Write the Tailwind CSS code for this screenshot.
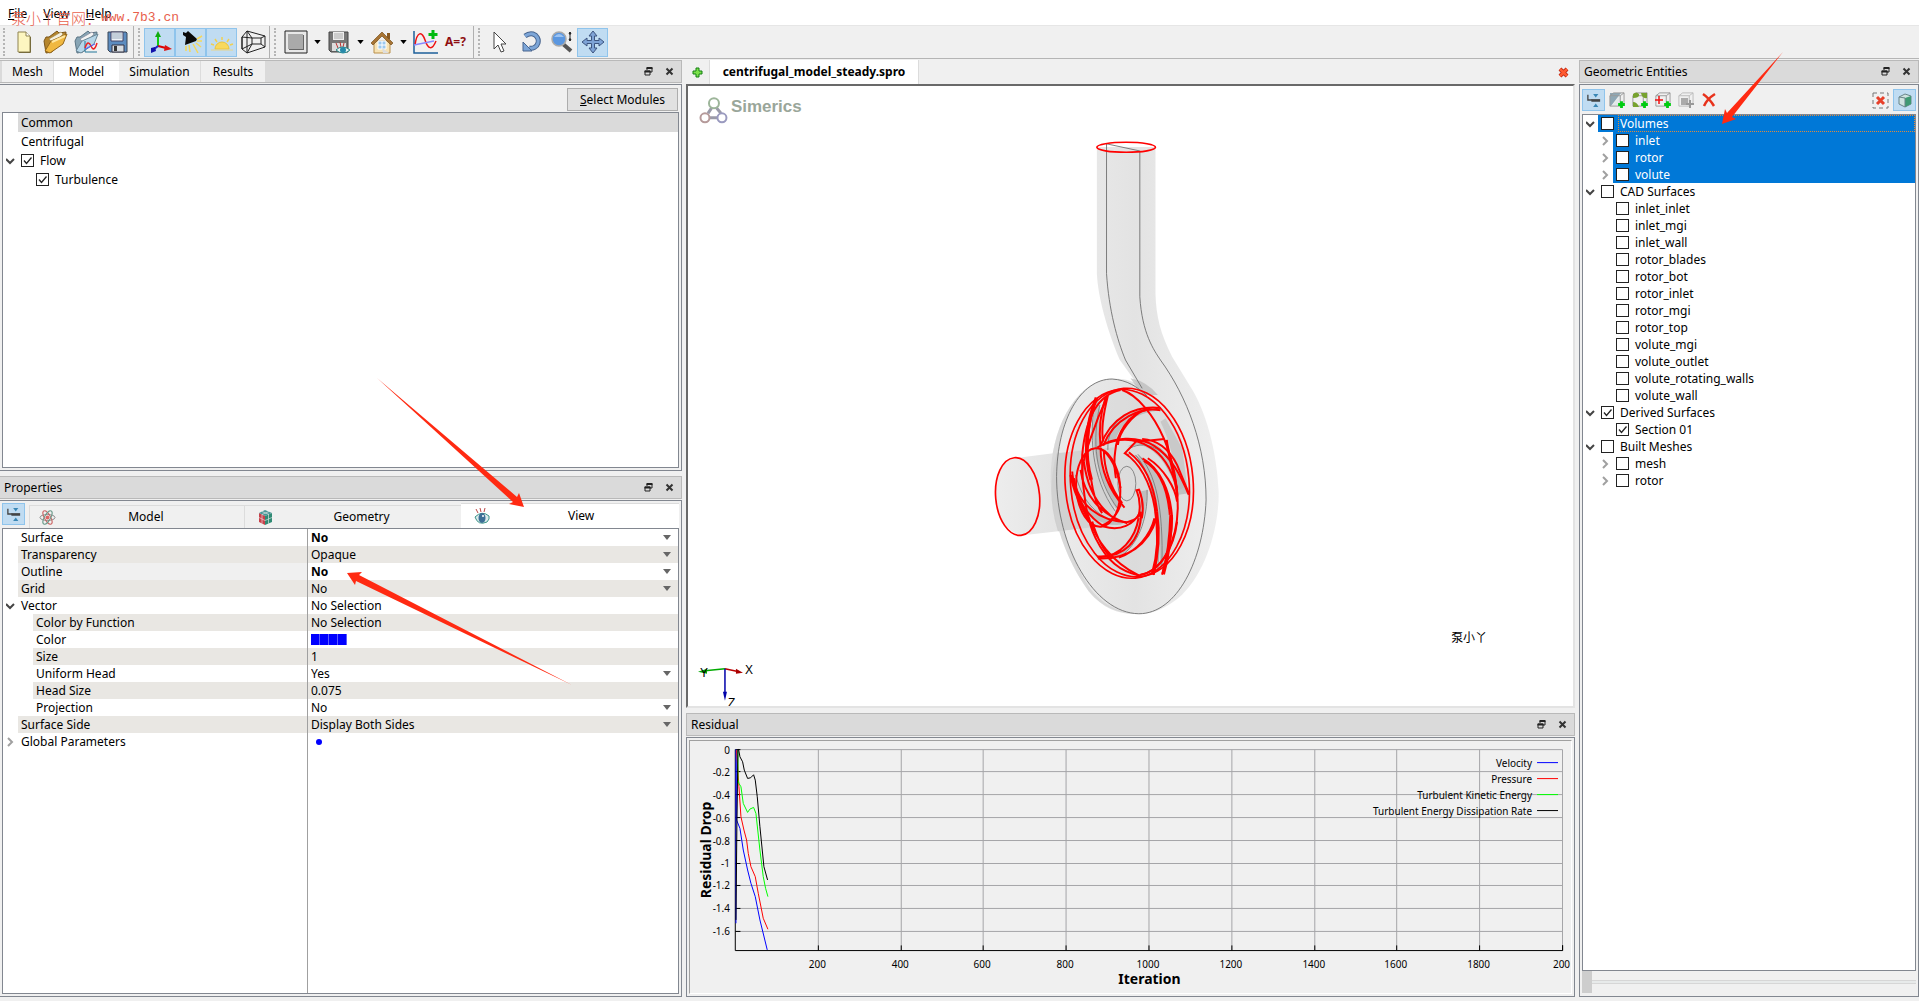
<!DOCTYPE html>
<html lang="en">
<head>
    <meta charset="UTF-8">
    <meta name="viewport" content="width=device-width, initial-scale=1.0">
    <title>Simerics - centrifugal_model_steady.spro</title>
    <script src="https://cdn.jsdelivr.net/npm/@tailwindcss/browser@4"></script>
    <style>
        body {
            font-family: 'Noto Sans', 'Noto Sans CJK SC', sans-serif;
        }
    </style>
</head>
<body class="relative flex h-screen flex-col overflow-hidden bg-[#f0f0f0] text-xs text-black">
    <!-- shared icons -->
    <svg class="hidden">
        <symbol id="restore" viewBox="0 0 9 9">
            <path d="M3 3V1h5v4H6" fill="none" stroke="#222"/><path d="M2.500 1h6" stroke="#222" stroke-width="2"/>
            <path d="M1 4h5v4H1z" fill="none" stroke="#222"/><path d="M.5 4.500h6" stroke="#222" stroke-width="2"/>
        </symbol>
        <symbol id="close" viewBox="0 0 9 9"><path d="M1.500 1.500l6 6M7.500 1.500l-6 6" stroke="#333" stroke-width="2"/></symbol>
        <symbol id="caret" viewBox="0 0 8 5"><path d="M0 0h8L4 5z" fill="currentColor"/></symbol>
        <symbol id="down" viewBox="0 0 10 8"><path d="M0 2l4 4 4-4" fill="none" stroke="#444" stroke-width="2"/></symbol>
        <symbol id="right" viewBox="0 0 10 10"><path d="M2 1l4 4-4 4" fill="none" stroke="#a0a0a0" stroke-width="2"/></symbol>
        <symbol id="tick" viewBox="0 0 13 13"><path d="M3 6.500l2.500 3L10.500 3.500" fill="none" stroke="#222" stroke-width="1.300"/></symbol>
        <symbol id="collapse" viewBox="0 0 18 16">
            <path d="M2 2v6h5" fill="none" stroke="#444" stroke-width="1.500"/>
            <path d="M6 7h10v3H6z" fill="#444"/><path d="M8 1h6l-3 4zM8 16h6l-3-4z" fill="#3a87b5"/>
        </symbol>
        <symbol id="cube" viewBox="0 0 18 18"><path d="M2 5l4-3h11v10l-4 4H2zM2 5h11v11M13 5l4-3" fill="none" stroke="#999"/></symbol>
        <symbol id="plus" viewBox="0 0 8 8"><path d="M4 1v6M1 4h6" stroke="#0c1" stroke-width="2.500"/></symbol>
    </svg>

    <nav class="flex h-[25px] shrink-0 gap-4 bg-white pl-2 leading-[28px]">
        <button><u>F</u>ile</button>
        <button><u>V</u>iew</button>
        <button><u>H</u>elp</button>
    </nav>
    <p class="pointer-events-none absolute left-[11px] top-1 flex items-center text-[#e8604c]">
        <span class="text-[15px] leading-7 font-light">泵小丫官网：</span>
        <span class="font-['Liberation_Mono'] text-[13px]">www.7b3.cn</span>
    </p>

    <!-- toolbar -->
    <div class="flex h-[34px] shrink-0 items-center border-b border-[#b5b5b5] border-t border-t-[#e6e6e6]">
        <div class="flex h-full items-center border-r border-[#b0b0b0] pl-[3px]">
            <div class="mr-[3px] h-7 border-l-2 border-dotted border-[#b5b5b5]"></div>
            <button class="flex h-[29px] w-[31px] items-center justify-center" aria-label="New">
                <svg width="18" height="24" viewBox="0 0 18 24"><path d="M3 2h8l4 4v16H3z" fill="#fdf6c0" stroke="#8f8350"/><path d="M11 2v4h4" fill="#fff" stroke="#8f8350"/><path d="M15.500 7v15.500H4" fill="none" stroke="#766b3c"/></svg>
            </button>
            <button class="flex h-[29px] w-[31px] items-center justify-center" aria-label="Open">
                <svg width="26" height="26" viewBox="0 0 26 26"><path d="M2 12l2-4h3l8-6 2 2 7-1-1 6-13 14-6 1z" fill="#b5852c" stroke="#7a561b"/><path d="M7 10l12-7 2 2-9 10z" fill="#f4f0e0" stroke="#a08a50" stroke-width=".7"/><path d="M3 22l6-10 16-7-4 10-13 9z" fill="#f0b840" stroke="#94671c"/><path d="M10 13l13-6" stroke="#ffe7a0" stroke-width="2"/></svg>
            </button>
            <button class="flex h-[29px] w-[31px] items-center justify-center" aria-label="Open results">
                <svg width="26" height="26" viewBox="0 0 26 26"><path d="M2 12l2-4h3l8-6 2 2 7-1-1 6-13 14-6 1z" fill="#88a5b5" stroke="#5b7484"/><path d="M7 10l12-7 2 2-9 10z" fill="#f4f4f4" stroke="#889" stroke-width=".7"/><path d="M3 22l6-10 16-7-4 10-13 9z" fill="#b6d6e8" stroke="#6b8797"/><path d="M12 12v11h12" stroke="#279" fill="none"/><path d="M12 19q3-9 6-2t6-3" stroke="#e22" fill="none" stroke-width="1.500"/><path d="M12 20l10-5" stroke="#55f"/></svg>
            </button>
            <button class="flex h-[29px] w-[31px] items-center justify-center" aria-label="Save">
                <svg width="22" height="24" viewBox="0 0 22 24"><path d="M2 2h18l1 1v19H4l-2-2z" fill="#5c8cc0" stroke="#3b4656"/><path d="M5 2h12v9H5z" fill="#eef3f8" stroke="#446"/><path d="M6 4h10M6 6h10M6 8h10" stroke="#99aabb"/><path d="M6 15h12v7H6z" fill="#d8dde2" stroke="#334"/><path d="M8 16h3v5H8z" fill="#333"/></svg>
            </button>
            <div class="w-[1px]"></div>
        </div>
        <div class="flex h-full items-center border-r border-[#b0b0b0] pl-[4px]">
            <div class="mr-[4px] h-7 border-l-2 border-dotted border-[#b5b5b5]"></div>
            <button class="flex h-[29px] w-[31px] items-center justify-center border border-[#8fc4ec] bg-[#c0dcf2]" aria-label="Axes">
                <svg width="24" height="24" viewBox="0 0 24 24"><path d="M10 16V6" stroke="#1c1" stroke-width="2"/><path d="M10 1l3 6H7z" fill="#1a1"/><path d="M10 16l8 2" stroke="#d00" stroke-width="2"/><path d="M17 15l7 4-8 2z" fill="#d11"/><path d="M10 16l-5 4" stroke="#22c" stroke-width="2"/><path d="M3 18l4-1 1 4-5 2z" fill="#11a"/></svg>
            </button>
            <button class="flex h-[29px] w-[31px] items-center justify-center border border-[#8fc4ec] bg-[#c0dcf2]" aria-label="Spotlight">
                <svg width="24" height="24" viewBox="0 0 24 24"><path d="M4 2l3 1 2-2 9 8-1 2-11 4 1-8-3-2z" fill="#0a0a0a"/><path d="M10 15l1 7M14 14l5 9M17 13l5 4M18 9l5-3M18 11h5M7 16v5" stroke="#f5d75a" stroke-width="1.500"/></svg>
            </button>
            <button class="flex h-[29px] w-[31px] items-center justify-center border border-[#8fc4ec] bg-[#c0dcf2]" aria-label="Ambient light">
                <svg width="24" height="24" viewBox="0 0 24 24"><path d="M5 19a7 7 0 0114 0z" fill="#f8d95e" stroke="#ecc53c"/><path d="M1 20h22" stroke="#e8d48a"/><path d="M12 10V7M7 12L5 9M17 12l2-3M4 15l-3-1M20 15l3-1" stroke="#f0cf50" stroke-width="1.500"/></svg>
            </button>
            <button class="flex h-[29px] w-[31px] items-center justify-center" aria-label="Perspective">
                <svg width="26" height="26" viewBox="0 0 26 26" fill="none" stroke="#222"><path d="M2 8l5-6 18 5v11L7 24l-5-4zM7 2v22M2 8v12M12 9h9v6h-9zM7 2l5 7M25 7l-4 2M25 18l-4-3M7 24l5-9M2 8l10 1M2 20l10-5"/></svg>
            </button>
            <div class="w-[1px]"></div>
        </div>
        <div class="flex h-full items-center border-r border-[#b0b0b0] pl-[4px]">
            <div class="mr-[4px] h-7 border-l-2 border-dotted border-[#b5b5b5]"></div>
            <button class="flex h-[29px] w-[31px] items-center justify-center" aria-label="Surface display">
                <svg width="24" height="24" viewBox="0 0 24 24"><path d="M1 1h22v22H1z" fill="#e8e8e8" stroke="#222"/><path d="M5 5h15v15H5z" fill="#666"/><path d="M4 4h15v15H4z" fill="#aaa"/></svg>
            </button>
            <button class="flex w-3 justify-center" aria-label="Surface display menu"><svg width="7" height="4"><use href="#caret"/></svg></button>
            <button class="flex h-[29px] w-[31px] items-center justify-center" aria-label="Save view">
                <svg width="24" height="24" viewBox="0 0 24 24"><path d="M2 2h19v20H4l-2-2z" fill="#777" stroke="#444"/><path d="M6 2h11v8H6z" fill="#eee"/><path d="M7 4h9M7 6h9M7 8h9" stroke="#aaa"/><path d="M5 13h14v8H5z" fill="#ddd"/><path d="M9 13l2 5M13 12l1 5M17 13l-1 4" stroke="#b33"/><path d="M9 20q6-6 14 0-7 6-14 0z" fill="#e8f4f4" stroke="#2a8c8c"/><circle cx="16" cy="20" r="3" fill="#268aaa"/></svg>
            </button>
            <button class="flex w-3 justify-center" aria-label="Save view menu"><svg width="7" height="4"><use href="#caret"/></svg></button>
            <button class="flex h-[29px] w-[31px] items-center justify-center" aria-label="Home view">
                <svg width="24" height="24" viewBox="0 0 24 24"><path d="M17 3h3v6h-3z" fill="#8a5a22"/><path d="M4 11h16v12H4z" fill="#f7e3b5" stroke="#b98f4b"/><path d="M1 13L12 2l11 11-2 2-9-9-9 9z" fill="#a87434" stroke="#77501d" stroke-width=".7"/><path d="M8 11h8v8H8z" fill="#9cc9f0" stroke="#fff"/><path d="M12 11v8M8 15h8" stroke="#fff"/><path d="M12 18l7 5h-6z" fill="#ddd"/></svg>
            </button>
            <button class="flex w-3 justify-center" aria-label="Home view menu"><svg width="7" height="4"><use href="#caret"/></svg></button>
            <button class="flex h-[29px] w-[31px] items-center justify-center" aria-label="Add plot">
                <svg width="26" height="26" viewBox="0 0 26 26"><path d="M2 2v22h24" fill="none" stroke="#1d5f99" stroke-width="1.500"/><path d="M3 16C5 2 10 2 13 11S20 22 24 12" fill="none" stroke="#e11" stroke-width="1.500"/><path d="M2 16l20-4" stroke="#88f" stroke-width="1.500"/><path d="M21 1v9M16.500 5.500h9" stroke="#0b1" stroke-width="3"/></svg>
            </button>
            <button class="flex h-[29px] w-[31px] items-center justify-center font-bold text-[#8f0f12]">A=?</button>
            <div class="w-[2px]"></div>
        </div>
        <div class="flex h-full items-center pl-[4px]">
            <div class="mr-[4px] h-7 border-l-2 border-dotted border-[#b5b5b5]"></div>
            <button class="flex h-[29px] w-[31px] items-center justify-center" aria-label="Select">
                <svg width="16" height="24" viewBox="0 0 16 24"><path d="M2 2v17l4-4 3 7 3-1-3-7h5z" fill="#fff" stroke="#444"/></svg>
            </button>
            <button class="flex h-[29px] w-[31px] items-center justify-center" aria-label="Rotate">
                <svg width="22" height="22" viewBox="0 0 22 22"><path d="M5 5q4-3 8-2a7 7 0 01-4 14" fill="none" stroke="#48658f" stroke-width="5"/><path d="M5 5q4-3 8-2a7 7 0 01-4 14" fill="none" stroke="#7da6d8" stroke-width="3"/><path d="M3 11v9h9z" fill="#7da6d8" stroke="#48658f"/></svg>
            </button>
            <button class="flex h-[29px] w-[31px] items-center justify-center" aria-label="Zoom">
                <svg width="24" height="24" viewBox="0 0 24 24"><path d="M13 14l8 7" stroke="#555" stroke-width="4"/><circle cx="9" cy="9" r="7" fill="#5b97e0" stroke="#aaa" stroke-width="1.500"/><path d="M4 7q5-6 10 0" fill="#9cc3f2"/><path d="M20 2v9M19 4l1-2 1 2zM19 9l1 2 1-2z" fill="#222" stroke="#222"/></svg>
            </button>
            <button class="flex h-[29px] w-[31px] items-center justify-center border border-[#8fc4ec] bg-[#c0dcf2]" aria-label="Pan">
                <svg width="24" height="24" viewBox="0 0 24 24"><path d="M12 1l4 5h-2.500v4.500H18V8l5 4-5 4v-2.500h-4.500V18H16l-4 5-4-5h2.500v-4.500H6V16l-5-4 5-4v2.500h4.500V6H8z" fill="#7ea3d6" stroke="#3d5580"/></svg>
            </button>
        </div>
    </div>

    <main class="flex min-h-0 flex-1 gap-1 pb-1 pt-px">
        <!-- left column -->
        <div class="flex w-[682px] shrink-0 flex-col gap-[5px]">
            <section class="flex h-[411px] flex-col">
                <header class="flex h-[23px] shrink-0 items-center border-y border-r border-[#b9b9b9] bg-[#dadada] pr-[7px]">
                    <div class="flex flex-1 self-stretch leading-5" role="tablist">
                        <button role="tab" class="ml-[2px] w-[52px] border-r border-[#dcdcdc] bg-[#f0f0f0]">Mesh</button>
                        <button role="tab" aria-selected="true" class="w-[65px] bg-white">Model</button>
                        <button role="tab" class="w-[82px] border-r border-[#dcdcdc] bg-[#f0f0f0]">Simulation</button>
                        <button role="tab" class="w-[64px] bg-[#f0f0f0]">Results</button>
                    </div>
                    <button class="mr-3" aria-label="Float"><svg width="9" height="9"><use href="#restore"/></svg></button>
                    <button aria-label="Close"><svg width="9" height="9"><use href="#close"/></svg></button>
                </header>
                <div class="mt-px flex min-h-0 flex-1 flex-col border border-l-0 border-[#828790] px-[2px] pb-[2px] pt-[3px]">
                    <button class="mb-px mr-px h-[23px] w-[111px] self-end border border-[#adadad] bg-[#e1e1e1]"><u>S</u>elect Modules</button>
                    <div id="moduleTree" class="flex-1 border border-[#828790] bg-white"></div>
                </div>
            </section>

            <section class="flex min-h-0 flex-1 flex-col">
                <header class="flex h-[23px] shrink-0 items-center border border-l-0 border-[#b9b9b9] bg-[#dadada] pl-1 pr-[7px]">
                    <h2 class="flex-1">Properties</h2>
                    <button class="mr-3" aria-label="Float"><svg width="9" height="9"><use href="#restore"/></svg></button>
                    <button aria-label="Close"><svg width="9" height="9"><use href="#close"/></svg></button>
                </header>
                <div class="mt-px flex min-h-0 flex-1 flex-col border border-l-0 border-[#828790] p-[2px]">
                    <div class="flex h-[25px] items-end">
                        <button class="mr-1 flex h-[22px] w-[23px] items-center justify-center self-start border border-[#8fc4ec] bg-[#c0dcf2]" aria-label="Collapse"><svg width="16" height="14"><use href="#collapse"/></svg></button>
                        <button class="flex h-[23px] flex-1 items-center border border-b-0 border-[#dcdcdc] pl-[9px]">
                            <svg width="17" height="17" viewBox="0 0 17 17" fill="none"><ellipse cx="8.500" cy="8.500" rx="7.500" ry="3" stroke="#888"/><ellipse cx="8.500" cy="8.500" rx="7.500" ry="3" stroke="#c66" transform="rotate(60 8.500 8.500)"/><ellipse cx="8.500" cy="8.500" rx="7.500" ry="3" stroke="#6a9a8a" transform="rotate(120 8.500 8.500)"/><circle cx="8.500" cy="8.500" r="2" fill="#d66"/></svg>
                            <span class="flex-1 pr-2">Model</span>
                        </button>
                        <button class="flex h-[23px] flex-1 items-center border-t border-[#dcdcdc] pl-[12px]">
                            <svg width="17" height="17" viewBox="0 0 17 17"><path d="M2 4l6 3v9l-6-3z" fill="#c8404a"/><path d="M8 7l7-3v9l-7 3z" fill="#2f8a74"/><path d="M2 4l6-3 7 3-7 3z" fill="#4a9797"/><path d="M5 5.500v9M11.500 5.500v9M2 8.500l6 3 7-3M5 2.500l7 3M12 2.500l-7 3" stroke="#eee" stroke-width=".6" fill="none"/></svg>
                            <span class="flex-1 pr-3">Geometry</span>
                        </button>
                        <button class="flex h-[25px] flex-1 items-center border-t border-[#dcdcdc] bg-white pl-[13px]">
                            <svg width="17" height="17" viewBox="0 0 17 17"><path d="M4 5L2 1M7 4L6 0M10 4l1-4" stroke="#b44"/><path d="M1 9q7-7 14-1 1 3-2 6-9 4-12-5z" fill="#dcebeb" stroke="#3b9488"/><ellipse cx="8" cy="10" rx="3.500" ry="5" fill="#3d6f96"/><circle cx="9" cy="8" r="1" fill="#fff"/></svg>
                            <span class="flex-1 pr-2">View</span>
                        </button>
                    </div>
                    <div class="flex flex-1 flex-col border border-[#828790] bg-white">
                        <div id="propertyRows"></div>
                        <div class="ml-[304px] flex-1 border-l border-[#a0a0a0]"></div>
                    </div>
                </div>
            </section>
        </div>

        <!-- centre column -->
        <div class="flex min-w-0 flex-1 flex-col gap-[5px]">
            <section class="flex min-h-0 flex-1 flex-col">
                <div class="flex h-6 shrink-0 items-center pl-[6px] pr-[6px]">
                    <button aria-label="New tab"><svg width="11" height="11" viewBox="0 0 11 11"><path d="M4 1h3v3h3v3H7v3H4V7H1V4h3z" fill="#7be04a" stroke="#128012"/></svg></button>
                    <button class="ml-[6px] h-full w-[210px] border-x border-[#dcdcdc] bg-white font-bold">centrifugal_model_steady.spro</button>
                    <button class="ml-auto" aria-label="Close tab"><svg width="11" height="11" viewBox="0 0 11 11"><path d="M2 2l7 7M9 2L2 9" stroke="#b02010" stroke-width="4"/><path d="M2 2l7 7M9 2L2 9" stroke="#ff5a30" stroke-width="2.500"/></svg></button>
                </div>
                <div class="min-h-0 flex-1 border-2 border-b-[#e3e3e3] border-l-[#696969] border-r-[#e3e3e3] border-t-[#696969] bg-white">
                    <svg class="h-full w-full" viewBox="687 86 886 620">
                        <!-- logo -->
                        <g fill="none" stroke-width="2">
                            <path d="M711 107l-4 6M715 107l5 6M709 117.500h8" stroke="#9a9aa8" stroke-width="3"/>
                            <circle cx="713" cy="103" r="5" stroke="#9db59a"/>
                            <circle cx="704" cy="117.500" r="4.500" stroke="#b59a9a"/>
                            <circle cx="721" cy="117.500" r="4.500" stroke="#9a9abf"/>
                        </g>
                        <text x="730" y="112" fill="#9aa69a" font-family="Liberation Sans" font-weight="bold" font-size="17">Simerics</text>

                        <!-- pump, drawn at three times its size -->
                        <defs>
                            <linearGradient id="pipe" x1="0" x2="1"><stop offset="0" stop-color="#ececec"/><stop offset=".5" stop-color="#e3e3e3"/><stop offset="1" stop-color="#efefef"/></linearGradient>
                            <linearGradient id="inlet" x1="0" x2="1"><stop offset="0" stop-color="#ededed"/><stop offset="1" stop-color="#dedede"/></linearGradient>
                        </defs>
                        <g transform="translate(960 360) scale(.33333)" fill="none">
                            <path d="M160 295L420 262V500L180 527Q105 500 103 400 105 310 160 295z" fill="url(#inlet)"/>
                            <path d="M409-640V-260C412-190 440-90 478 0L530 72C500 55 470 55 440 57 340 75 270 210 270 360 275 500 330 620 385 695 430 750 490 762 540 762 580 762 620 745 665 705 740 630 775 500 775 400 770 270 735 150 690 80L635-10C600-80 587-130 585-200V-640z" fill="url(#pipe)"/>
                            <path d="M288 280L460 262V495L292 514Q255 400 288 280z" fill="#c8c8c8" fill-opacity=".75"/>
                            <path d="M440 57C340 80 290 200 288 350 290 500 350 640 400 700 440 745 490 762 535 762 480 765 430 750 385 695 330 620 275 500 270 360 270 210 340 75 440 57z" fill="#d2d2d2" fill-opacity=".7"/>
                            <path d="M510 55Q560 65 592 105L545 105z" fill="#b9b9b9" fill-opacity=".7"/>
                            <ellipse cx="506" cy="370" rx="186" ry="283" transform="rotate(-5 506 370)" fill="#d4d4d4" fill-opacity=".5"/>

                            <!-- volute seams -->
                            <g stroke="#666" stroke-width="2.500">
                                <path d="M438-650V-260C445-150 470-60 495 0L545 85"/>
                                <path d="M538-628V-190C545-80 580-30 600 0 680 110 737 260 737 420 730 600 650 762 535 762 400 760 288 560 288 350 290 180 360 57 455 57 500 60 530 80 560 108"/>
                                <path d="M440-649L538-628"/>
                            </g>

                            <!-- blade faces -->
                            <g transform="translate(300 45)" fill="#b4b4b4" fill-opacity=".75">
                                <path d="M112 68C85 150 90 260 165 400L190 395C130 330 110 240 118 110z"/>
                                <path d="M300 100C220 95 150 130 130 210L165 200C175 150 220 115 300 106z"/>
                                <path d="M200 215L240 195C300 195 340 250 385 355L350 360C330 270 280 215 235 210z"/>
                                <path d="M222 240C270 290 290 400 300 585L320 560C340 420 320 300 248 250z"/>
                                <path d="M35 290C45 380 100 430 200 440L180 450C100 455 50 400 35 290z"/>
                                <path d="M170 545C220 530 255 450 260 345L240 350C245 440 220 510 150 548z"/>
                                <path d="M315 130L365 220 380 330 350 350C345 270 330 200 300 140z" fill-opacity=".5"/>
                            </g>
                            <g transform="translate(300 45)" stroke="#777" stroke-width="2.500">
                                <path d="M105 75C85 170 90 310 165 410M118 90C95 190 100 310 175 405M195 120C160 140 140 180 142 225M225 240C270 290 300 400 292 590M232 238C285 290 310 400 304 575M260 345C262 440 230 510 180 545M200 225C250 190 310 220 340 280M45 300C65 370 90 400 130 425"/>
                                <ellipse cx="199" cy="326" rx="27" ry="52"/>
                            </g>

                            <!-- rotor and inlet outlines -->
                            <g stroke="#f00" stroke-width="5">
                                <ellipse cx="497" cy="-639" rx="88" ry="15"/>
                                <ellipse cx="171" cy="410" rx="66" ry="117" transform="rotate(-5 171 410)"/>
                                <ellipse cx="500" cy="372" rx="186" ry="284" transform="rotate(-5 500 372)"/>
                                <ellipse cx="514" cy="368" rx="184" ry="284" transform="rotate(-5 514 368)"/>
                            </g>
                            <g transform="translate(300 45)" stroke="#f00" stroke-width="6">
                                <ellipse cx="113" cy="338" rx="66" ry="118" transform="rotate(-4 113 338)"/>
                                <path d="M180 45C110 60 75 130 65 240 62 340 80 440 105 490 140 560 180 590 235 602 300 590 340 520 350 440"/>
                                <path d="M185 45C230 60 280 120 310 190 340 260 352 330 352 400 350 490 310 590 240 600" />
                                <path d="M108 68C75 150 70 240 92 315" stroke-width="11"/>
                                <path d="M100 90C82 160 80 200 80 240"/>
                                <path d="M135 68C118 120 115 170 120 215M142 62C125 130 122 170 128 200"/>
                                <path d="M140 65C110 130 60 260 65 300"/>
                                <path d="M300 99C220 90 150 130 120 212M300 106C240 95 160 130 128 212"/>
                                <path d="M265 103C200 115 168 180 164 230 158 270 164 290 166 310M255 103C215 120 175 170 172 210"/>
                                <path d="M110 218C160 185 230 182 280 212 330 242 360 300 385 360M120 212C180 185 230 192 270 218 310 240 335 290 350 340"/>
                                <path d="M245 192C300 195 330 230 350 270L385 355M235 200L312 192"/>
                                <path d="M318 195C325 250 350 320 350 365" stroke-width="8"/>
                                <path d="M232 194L193 235 205 242M193 235C235 262 270 320 283 400 295 480 290 560 280 600M205 232C245 262 280 320 290 410"/>
                                <path d="M288 410C298 480 290 550 276 600" stroke-width="10"/>
                                <path d="M246 250C300 280 330 350 335 430 335 500 315 560 305 600M250 258C290 280 320 330 328 420M262 250C310 280 345 340 350 380"/>
                                <path d="M332 420C330 500 322 550 308 598" stroke-width="11"/>
                                <path d="M35 290C35 370 90 430 130 455 180 470 220 450 240 410M40 310C50 390 120 440 200 442 225 435 240 425 242 410"/>
                                <path d="M60 285C70 360 120 420 200 445M70 260C80 340 110 400 175 440M92 315C100 370 110 395 125 415"/>
                                <path d="M32 300C45 370 70 400 85 435" stroke-width="11"/>
                                <path d="M120 218C120 280 145 345 192 398M130 225C130 280 150 340 185 385"/>
                                <path d="M118 220C150 240 170 280 180 340M182 378C178 410 155 440 125 452"/>
                                <path d="M228 345C238 370 240 400 234 425M236 345C246 370 250 400 244 430M225 347L238 344"/>
                                <path d="M110 545C190 550 240 500 242 415M112 551C200 555 265 510 288 430M120 545C180 545 225 490 234 430M175 548C230 530 270 480 282 430"/>
                                <path d="M85 430C105 490 150 560 235 602M95 440C110 490 130 530 155 552"/>
                            </g>
                        </g>

                        <!-- axis triad -->
                        <path d="M724 669l-20 2" stroke="#0a0" stroke-width="1.500"/><path d="M697 672l9-3v5z" fill="#0a0"/>
                        <path d="M724 669l14 3" stroke="#b00" stroke-width="1.500"/><path d="M742 673l-7-4v5z" fill="#a00"/>
                        <path d="M724 669v24" stroke="#00a" stroke-width="1.500"/><path d="M724 701l-2-9h4z" fill="#00a"/>
                        <g font-family="Liberation Sans" font-size="12">
                            <text x="744" y="674">X</text>
                            <text x="699" y="677">Y</text>
                            <text x="727" y="707">Z</text>
                        </g>
                        <text x="1451" y="642" font-size="12">泵小丫</text>
                    </svg>
                </div>
            </section>

            <section class="flex h-[284px] shrink-0 flex-col">
                <header class="flex h-[23px] shrink-0 items-center border border-[#b9b9b9] bg-[#dadada] pl-1 pr-[7px]">
                    <h2 class="flex-1">Residual</h2>
                    <button class="mr-3" aria-label="Float"><svg width="9" height="9"><use href="#restore"/></svg></button>
                    <button aria-label="Close"><svg width="9" height="9"><use href="#close"/></svg></button>
                </header>
                <div class="mt-px min-h-0 flex-1 border border-[#828790] p-[2px]">
                    <div class="h-full border border-b-white border-l-[#a0a0a0] border-r-white border-t-[#a0a0a0]">
                        <svg class="h-full w-full" viewBox="690 741 882 252">
                            <g id="grid"></g>
                            <g id="tickLabels" font-size="10"></g>
                            <g id="legend" font-size="10" text-anchor="end"></g>
                            <g transform="translate(680 620) scale(.33333)" fill="none" stroke-width="3">
                                <path d="M166 388V992H2651V976" stroke="#000"/>
                                <path d="M168 910V388M171 390L170 600 180 625 190 690 203 750 213 790 226 830 240 900 262 990" stroke="#00f"/>
                                <path d="M170 390L172 420 177 500 183 590 192 630 200 660 205 700 213 740 226 770 235 820 250 895 264 928" stroke="#f00"/>
                                <path d="M174 390V480L177 490 183 500 190 550 203 577 210 567 221 562 228 580 240 690 250 770 257 805 264 830" stroke="#0f0"/>
                                <path d="M168 900L171 600 174 388H176L180 410 188 425 193 450 203 475 212 473 221 464 226 480 232 530 240 620 252 740 263 780" stroke="#000"/>
                            </g>
                            <text x="1150" y="984" font-size="14" font-weight="bold" text-anchor="middle">Iteration</text>
                            <text transform="translate(711 850) rotate(-90)" font-size="14" font-weight="bold" text-anchor="middle">Residual Drop</text>
                        </svg>
                    </div>
                </div>
            </section>
        </div>

        <!-- right column -->
        <section class="flex w-[340px] shrink-0 flex-col">
            <header class="flex h-[23px] shrink-0 items-center border border-[#b9b9b9] bg-[#dadada] pl-1 pr-[7px]">
                <h2 class="flex-1">Geometric Entities</h2>
                <button class="mr-3" aria-label="Float"><svg width="9" height="9"><use href="#restore"/></svg></button>
                <button aria-label="Close"><svg width="9" height="9"><use href="#close"/></svg></button>
            </header>
            <div class="mt-px flex min-h-0 flex-1 flex-col border border-[#828790] px-[2px] pb-[3px] pt-1">
                <div class="mb-[3px] flex h-[22px] shrink-0 items-center">
                    <button class="flex h-[22px] w-[23px] items-center justify-center border border-[#8fc4ec] bg-[#c0dcf2]" aria-label="Collapse"><svg width="16" height="14"><use href="#collapse"/></svg></button>
                    <button class="flex w-[23px] justify-center" aria-label="Add section"><svg width="18" height="18"><path d="M2 2h11L3 15H2z" fill="#8fa8b5"/><path d="M13 3v12H4z" fill="#e2e8ea"/><use href="#cube" width="17" height="17"/><use href="#plus" x="9" y="9" width="9" height="9"/></svg></button>
                    <button class="flex w-[23px] justify-center" aria-label="Add isosurface"><svg width="18" height="18"><use href="#cube" width="17" height="17"/><path d="M2 3q3-3 6 0 1 4-6 4zM10 2h6v5q-5 1-6-5zM2 11q4 0 6 5H2z" fill="#77a22f"/><use href="#plus" x="9" y="9" width="9" height="9"/></svg></button>
                    <button class="flex w-[23px] justify-center" aria-label="Add point"><svg width="18" height="18"><use href="#cube" width="17" height="17"/><path d="M5 5v8M1 9h8" stroke="#e11" stroke-width="1.500"/><use href="#plus" x="9" y="9" width="9" height="9"/></svg></button>
                    <button class="flex w-[23px] justify-center" aria-label="Add volume" disabled><svg width="18" height="18"><use href="#cube" width="17" height="17" opacity=".6"/><path d="M4 7h7v7H4z" fill="#aaa"/><path d="M13 9v8M9 13h8" stroke="#999" stroke-width="2"/></svg></button>
                    <button class="flex w-[23px] justify-center" aria-label="Delete"><svg width="16" height="16"><path d="M2 2q6 4 11 12M14 2Q6 7 3 14" fill="none" stroke="#e8321c" stroke-width="2.500"/></svg></button>
                    <button class="ml-auto mr-1 flex" aria-label="Clear selection"><svg width="17" height="17"><path d="M1 1h15v15H1z" fill="none" stroke="#777" stroke-dasharray="4 3"/><path d="M5 5l7 7M12 5l-7 7" stroke="#e8402a" stroke-width="3"/></svg></button>
                    <button class="flex h-[22px] w-[23px] items-center justify-center border border-[#8fc4ec] bg-[#c0dcf2]" aria-label="Shaded"><svg width="16" height="16"><path d="M2 5l6-3 6 2v8l-6 3-6-3z" fill="#cfe3e0" stroke="#69858a"/><path d="M8 6l6-2v8l-6 3z" fill="#3f9a73"/><path d="M2 5l6 1v9" fill="none" stroke="#69858a"/></svg></button>
                </div>
                <div id="entityTree" class="flex-1 border border-[#828790] bg-white leading-[17px]"></div>
                <div class="flex h-[22px] shrink-0 items-center">
                    <div class="h-full w-[10px] bg-[#cdcdcd]"></div>
                    <div class="h-1 flex-1 border-y border-[#d6d6d6] bg-[#e7eaea]"></div>
                </div>
            </div>
        </section>
    </main>

    <!-- callout arrows -->
    <svg class="pointer-events-none absolute inset-0 h-full w-full" fill="#ff2a12">
        <path d="M524 507L509 504 513 502 377 378 517 497 519 493z"/>
        <path d="M347 573L362 572 359 575 572 685 356 581 355 585z"/>
        <path d="M1722 124L1725 109 1727 113 1783 52 1732 117 1736 119z"/>
    </svg>

    <script>
        const checkbox = (checked) => `
            <span class="grid size-[13px] shrink-0">
                <input type="checkbox" ${checked ? 'checked' : ''} class="peer col-start-1 row-start-1 size-[13px] appearance-none border border-[#222] bg-white">
                <svg class="pointer-events-none col-start-1 row-start-1 hidden size-[13px] peer-checked:block"><use href="#tick"/></svg>
            </span>`;
        const arrow = (kind) => `
            <span class="flex w-[15px] shrink-0 items-center justify-center">${kind ? `<svg width="10" height="10"><use href="#${kind}"/></svg>` : ''}</span>`;

        // module tree: [name, depth, arrow, checkbox state]
        const modules = [
            ['Common', 0, '', null],
            ['Centrifugal', 0, '', null],
            ['Flow', 0, 'down', true],
            ['Turbulence', 1, '', true],
        ];
        document.getElementById('moduleTree').innerHTML = modules.map(([name, depth, kind, checked], i) => `
            <div class="flex h-[19px] ${depth ? 'pl-[15px]' : ''}">
                ${arrow(kind)}
                <label class="flex flex-1 items-center gap-[6px] pl-[3px] ${i === 0 ? 'bg-[#dadada]' : ''}">
                    ${checked === null ? '' : checkbox(checked)}<span>${name}</span>
                </label>
            </div>`).join('');

        // geometric entities: [name, depth, arrow, checked, selected]
        const entities = [
            ['Volumes', 0, 'down', false, true],
            ['inlet', 1, 'right', false, true],
            ['rotor', 1, 'right', false, true],
            ['volute', 1, 'right', false, true],
            ['CAD Surfaces', 0, 'down'],
            ...['inlet_inlet', 'inlet_mgi', 'inlet_wall', 'rotor_blades', 'rotor_bot', 'rotor_inlet', 'rotor_mgi', 'rotor_top',
                'volute_mgi', 'volute_outlet', 'volute_rotating_walls', 'volute_wall'].map((name) => [name, 1, '']),
            ['Derived Surfaces', 0, 'down', true],
            ['Section 01', 1, '', true],
            ['Built Meshes', 0, 'down'],
            ['mesh', 1, 'right'],
            ['rotor', 1, 'right'],
        ];
        document.getElementById('entityTree').innerHTML = entities.map(([name, depth, kind, checked, selected], i) => `
            <div class="flex h-[17px] ${depth ? 'pl-[15px]' : ''}">
                ${arrow(kind)}
                <label class="flex flex-1 items-center gap-1 pl-[3px] ${selected ? 'bg-[#0078d7] text-white' : ''}">
                    ${checkbox(checked)}<span class="flex-1 border border-dotted px-px leading-[15px] ${i === 0 ? 'border-[#e08a3c]' : 'border-transparent'}">${name}</span>
                </label>
            </div>`).join('');

        // property rows: [name, depth, type, value, bold, arrow]
        const properties = [
            ['Surface', 0, 'select', 'No', true],
            ['Transparency', 0, 'select', 'Opaque'],
            ['Outline', 0, 'select', 'No', true],
            ['Grid', 0, 'select', 'No'],
            ['Vector', 0, 'text', 'No Selection', false, 'down'],
            ['Color by Function', 1, 'text', 'No Selection'],
            ['Color', 1, 'color', ''],
            ['Size', 1, 'input', '1'],
            ['Uniform Head', 1, 'select', 'Yes'],
            ['Head Size', 1, 'input', '0.075'],
            ['Projection', 1, 'select', 'No'],
            ['Surface Side', 0, 'select', 'Display Both Sides'],
            ['Global Parameters', 0, 'dot', '', false, 'right'],
        ];
        const blueCell = '<span class="w-[9px] border-r border-[#5c5cff] bg-[#00f]"></span>';
        function propertyValue(type, value, bold, id) {
            const weight = bold ? 'font-bold' : '';
            if (type === 'select') {
                return `<select id="${id}" class="flex-1 appearance-none bg-transparent ${weight}"><option>${value}</option></select>
                    <svg class="pointer-events-none mr-[7px] text-[#666]" width="8" height="5"><use href="#caret"/></svg>`;
            }
            if (type === 'input') {
                return `<input id="${id}" type="text" value="${value}" class="min-w-0 flex-1 bg-transparent">`;
            }
            if (type === 'color') {
                return `<button id="${id}" class="flex h-[11px]" aria-label="Blue">${blueCell.repeat(4)}</button>`;
            }
            if (type === 'dot') {
                return `<span class="ml-[5px] size-[6px] rounded-full bg-[#00f]"></span>`;
            }
            return `<span>${value}</span>`;
        }
        document.getElementById('propertyRows').innerHTML = properties.map(([name, depth, type, value, bold, kind], i) => `
            <div class="flex h-[17px] leading-[17px]">
                <div class="flex w-[304px] ${depth ? 'pl-[15px]' : ''}">
                    ${arrow(kind)}
                    <label for="prop${i}" class="flex-1 pl-[3px] ${i % 2 ? 'bg-[#e9e7e3]' : ''} ${i === 2 ? 'bg-[#f0f0f0]' : ''}">${name}</label>
                </div>
                <div class="flex flex-1 items-center border-l border-[#a0a0a0] pl-[3px] ${i % 2 ? 'bg-[#e9e7e3]' : ''}">
                    ${propertyValue(type, value, bold, 'prop' + i)}
                </div>
            </div>`).join('');

        // residual plot
        const left = 735.5, right = 1563.5, top0 = 749.5, bottom = 950.5;
        let grid = '', ticks = '';
        for (let i = 1; i <= 10; i++) {
            const x = Math.floor(left + i * 82.8) + 0.5;
            grid += `<path d="M${x} ${top0}V${bottom}" stroke="#a5a5a8"/><path d="M${x} ${bottom - 5}v5" stroke="#000"/>`;
            ticks += `<text x="${x - 1}" y="968" text-anchor="middle">${i < 10 ? i * 200 : '200'}</text>`;
        }
        for (let i = 0; i <= 8; i++) {
            const y = Math.round(top0 + i * 22.8) - 0.5;
            grid += `<path d="M${left} ${y}H${right}" stroke="#a5a5a8"/><path d="M${left} ${y}h5" stroke="#000"/>`;
            ticks += `<text x="730" y="${y + 4}" text-anchor="end">${-i * 2 / 10}</text>`;
        }
        document.getElementById('grid').innerHTML = grid;
        document.getElementById('tickLabels').innerHTML = ticks;

        const series = [['Velocity', '#00f'], ['Pressure', '#f00'], ['Turbulent Kinetic Energy', '#0f0'], ['Turbulent Energy Dissipation Rate', '#000']];
        document.getElementById('legend').innerHTML = series.map(([name, color], i) => `
            <text x="1533" y="${767 + i * 16}">${name}</text>
            <path d="M1538 ${762.5 + i * 16}h21" stroke="${color}"/>`).join('');
    </script>
</body>
</html>
